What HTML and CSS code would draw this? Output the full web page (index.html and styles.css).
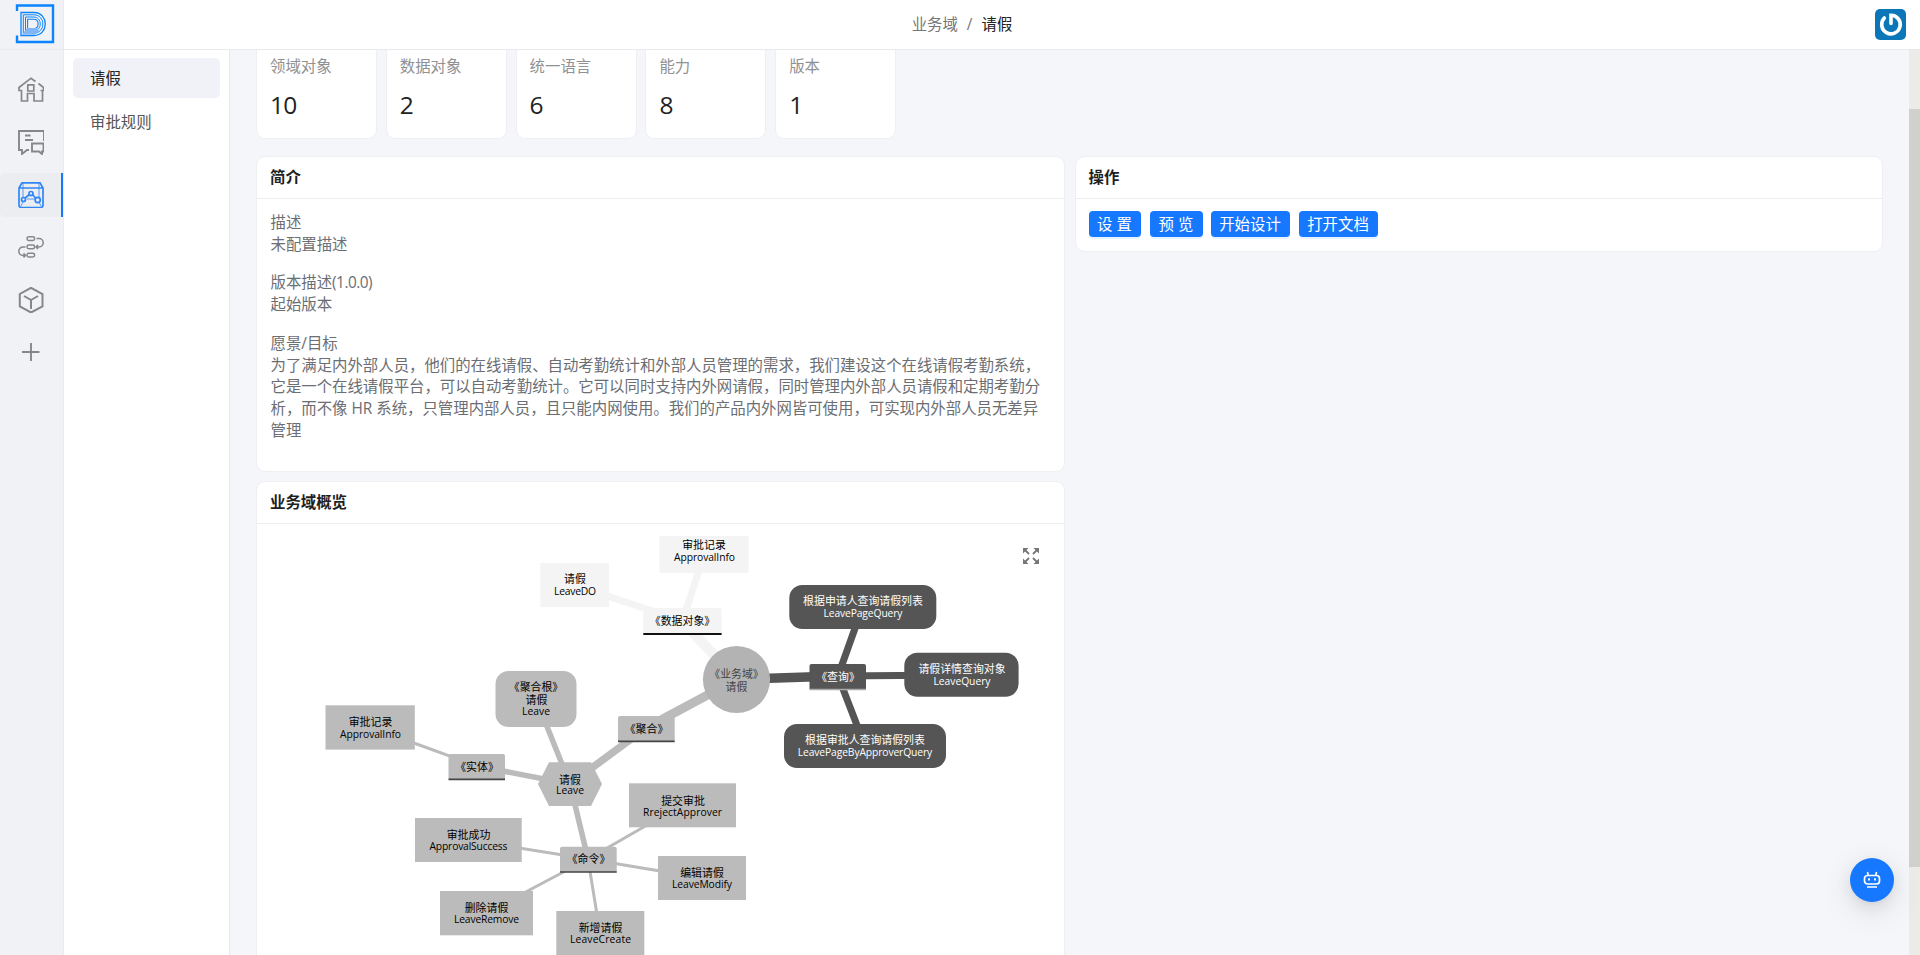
FILE: index.html
```html
<!DOCTYPE html>
<html lang="zh-CN">
<head>
<meta charset="utf-8">
<title>业务域 / 请假</title>
<link rel="stylesheet" href="styles.css">
</head>
<body>
<div class="app">
  <aside class="rail">
    <div class="logo">
      <svg width="40" height="40" viewBox="0 0 40 40" fill="none" stroke="#0a84ff">
        <path d="M2 7V1.500H38V38H2V31.500" stroke-width="2.400"/>
        <path d="M6 8.500h13c15 0 15 23 0 23H6z" stroke-width="1.300"/>
        <path d="M8.300 10.800h10.500c12 0 12 18.400 0 18.400H8.300z" stroke-width="1"/>
        <path d="M10.500 13h8c9 0 9 14 0 14h-8z" stroke-width="1"/>
        <path d="M12.600 15.300h6c6 0 6 9.400 0 9.400h-6z" stroke-width="1.100" fill="#f0f2f6"/>
        <path d="M7 30.500l5-6.500h9l4 3-5 3.500H7z" fill="#7fb6f8" stroke="none"/>
      </svg>
    </div>
    <nav class="rail-nav">
      <a class="rail-item"><svg class="icon" viewBox="0 0 26 26"><path d="M17.500 4.500L13 1.200 1 10.500v3h2.500V24h6v-7.500H16V24h8.500V14M20.500 6.500L25.500 10.500v3h-3M9.800 7.800h6v6.200h-6z"/></svg></a>
      <a class="rail-item"><svg class="icon" viewBox="0 0 26 26"><path d="M26 12V2H1v19h3v4l5-4h2M7 6.500h5.500M7 11h8M14 14.500h11.500v8H24v2.500L21 22.500h-7z" stroke-width="1.900"/></svg></a>
      <a class="rail-item active"><svg class="icon" viewBox="0 0 26 26"><path d="M1 6L4 .800h18L25 6v17q0 2.500-2.500 2.500h-19Q1 25.500 1 23zM1 6h24"/><path d="M5 1v14M21 1v14M5 20l-2 4M21 20l2 4M9 17h8" stroke-width=".8"/><path d="M7 16l4.500-3.500M14.500 12.500l3.500 4"/><circle cx="5.500" cy="17.500" r="2"/><circle cx="13" cy="11.500" r="2"/><circle cx="19.700" cy="18" r="2.600"/></svg></a>
      <a class="rail-item"><svg class="icon" viewBox="0 0 26 26"><g stroke-width="1.500"><rect x="9" y="2.700" width="7.600" height="3.800" rx="1.700"/><rect x="9" y="11" width="7.600" height="3.800" rx="1.700"/><rect x="9" y="19.200" width="7.600" height="3.800" rx="1.700"/><path d="M18.500 4.600H21a4.200 4.200 0 0 1 0 8.400h-3m2-2l-2 2 2 2M7.500 13H5a4.200 4.200 0 0 0 0 8.400h2.500m-2-2l2 2-2 2"/></g></svg></a>
      <a class="rail-item"><svg class="icon" viewBox="0 0 26 26"><path d="M13 .800L24.500 7v12.500L13 25.500 1.800 19.500V7zM13 22v-9L6 9m7 4l7-4" stroke-width="2"/></svg></a>
      <a class="rail-item"><svg class="icon" viewBox="0 0 26 26"><path d="M13 4v18M4 13h17.500" stroke-width="1.900"/></svg></a>
    </nav>
  </aside>
  <div class="page">
    <header class="topbar">
      <div class="crumbs"><span>业务域</span><span class="sep">/</span><span class="current">请假</span></div>
      <div class="avatar"><svg width="31" height="31" viewBox="0 0 31 31" fill="none" stroke="#fff" stroke-width="3.600" stroke-linecap="round"><path d="M9.300 9A9.300 9.300 0 1 0 16 6.200v8.300"/></svg></div>
    </header>
    <div class="below">
      <nav class="side">
        <a class="side-item selected">请假</a>
        <a class="side-item">审批规则</a>
      </nav>
      <main class="content">
        <div class="stats">
          <div class="stat"><div class="stat-label">领域对象</div><div class="stat-num">10</div></div>
          <div class="stat"><div class="stat-label">数据对象</div><div class="stat-num">2</div></div>
          <div class="stat"><div class="stat-label">统一语言</div><div class="stat-num">6</div></div>
          <div class="stat"><div class="stat-label">能力</div><div class="stat-num">8</div></div>
          <div class="stat"><div class="stat-label">版本</div><div class="stat-num">1</div></div>
        </div>
        <div class="columns">
          <div class="column">
            <section class="card intro">
              <h2 class="card-title">简介</h2>
              <div class="card-body">
                <p>描述<br>未配置描述</p>
                <p>版本描述<span class="ver">(1.0.0)</span><br>起始版本</p>
                <p>愿景/目标<br>为了满足内外部人员，他们的在线请假、自动考勤统计和外部人员管理的需求，我们建设这个在线请假考勤系统，<br>它是一个在线请假平台，可以自动考勤统计。它可以同时支持内外网请假，同时管理内外部人员请假和定期考勤分<br>析，而不像 HR 系统，只管理内部人员，且只能内网使用。我们的产品内外网皆可使用，可实现内外部人员无差异<br>管理</p>
              </div>
            </section>
            <section class="card overview">
              <h2 class="card-title">业务域概览</h2>
              <svg class="mindmap" width="806" height="432" viewBox="257 524 806 432">
                <g class="edge light"><path d="M736.500 679.500L682.500 621" stroke-width="10"/><path d="M704 555L682.500 621L574.700 585" stroke-width="7"/></g>
                <g class="edge mid"><path d="M736.500 679.500L646 728" stroke-width="9"/><path d="M646 728L570 784" stroke-width="7.500"/><path d="M570 784L536 699M570 784L477 766M570 784L588 859" stroke-width="5.500"/><path d="M477 766L370 727M588 859L468 840M588 859L486 913M588 859L600 933M588 859L702 878M588 859L682 805" stroke-width="3"/></g>
                <g class="edge dark"><path d="M736.500 679.500L838 676" stroke-width="9.500"/><path d="M838 676L862.600 607M838 676L961.600 675M838 676L865 746" stroke-width="7"/></g>

                <g class="fill-light">
                  <rect x="659.500" y="536" width="89" height="37"/>
                  <rect x="540.300" y="563" width="68.700" height="44"/>
                  <path d="M643.300 634v-24q0-2 2-2h74.300q2 0 2 2v24z"/>
                </g>
                <circle cx="736.500" cy="679.500" r="33.600" fill="#b3b3b3"/>
                <g class="fill-mid">
                  <path d="M618 741v-23q0-2 2-2h52.700q2 0 2 2v23z"/>
                  <rect x="495.500" y="671" width="81" height="56" rx="13"/>
                  <rect x="325.500" y="705.300" width="89.300" height="44.300"/>
                  <path d="M448.500 779v-23q0-2 2-2H503q2 0 2 2v23z"/>
                  <path d="M538 784l11-21.700h42l11 21.700-11 22h-42z"/>
                  <rect x="629" y="783.300" width="107" height="44"/>
                  <rect x="415" y="818" width="106.700" height="44"/>
                  <path d="M560 872v-23.300q0-2 2-2h52.700q2 0 2 2V872z"/>
                  <rect x="658" y="856" width="88" height="44"/>
                  <rect x="440" y="891" width="93" height="44.300"/>
                  <rect x="556.300" y="911" width="88" height="45"/>
                </g>
                <g class="fill-dark">
                  <rect x="789.300" y="585" width="147" height="44" rx="13"/>
                  <path d="M809.500 689v-23q0-2 2-2H864q2 0 2 2v23z"/>
                  <rect x="904.300" y="652.700" width="114.300" height="44" rx="13"/>
                  <rect x="784" y="724" width="162" height="44" rx="13"/>
                </g>
                <path d="M643.300 634h78.300" stroke="#111" stroke-width="2"/>
                <path d="M618 741.300h56.700M448.500 779.300H505M560 872h56.700" stroke="#444" stroke-width="1.700"/>
                <path d="M809.500 689.500H866" stroke="#aaa" stroke-width="1.600"/>

                <g class="label">
                  <text x="704" y="549">审批记录</text><text x="704.500" y="560.500" textLength="61">ApprovalInfo</text>
                  <text x="575" y="583">请假</text><text x="575" y="594.500" textLength="42">LeaveDO</text>
                  <text x="682.500" y="625">《数据对象》</text>
                  <text x="646.500" y="733">《聚合》</text>
                  <text x="536" y="691">《聚合根》</text><text x="536.500" y="703.500">请假</text><text x="536" y="714.500" textLength="28">Leave</text>
                  <text x="370.500" y="726">审批记录</text><text x="370.500" y="738" textLength="61">ApprovalInfo</text>
                  <text x="477" y="771">《实体》</text>
                  <text x="570" y="783.500">请假</text><text x="570" y="794" textLength="28">Leave</text>
                  <text x="683" y="804.500">提交审批</text><text x="682.500" y="816" textLength="79">RrejectApprover</text>
                  <text x="468.500" y="838.500">审批成功</text><text x="468.500" y="850" textLength="78">ApprovalSuccess</text>
                  <text x="588.500" y="863">《命令》</text>
                  <text x="702" y="876.500">编辑请假</text><text x="702" y="888" textLength="60">LeaveModify</text>
                  <text x="486.500" y="911.500">删除请假</text><text x="486.500" y="923" textLength="65">LeaveRemove</text>
                  <text x="600.500" y="931.500">新增请假</text><text x="600.500" y="943" textLength="61">LeaveCreate</text>
                </g>
                <g class="label root"><text x="736.500" y="678">《业务域》</text><text x="736.500" y="690.500">请假</text></g>
                <g class="label inverse">
                  <text x="863" y="605">根据申请人查询请假列表</text><text x="863" y="616.500" textLength="79">LeavePageQuery</text>
                  <text x="838" y="681">《查询》</text>
                  <text x="962" y="673">请假详情查询对象</text><text x="962" y="684.500" textLength="57">LeaveQuery</text>
                  <text x="865" y="744">根据审批人查询请假列表</text><text x="865" y="756" textLength="134.500">LeavePageByApproverQuery</text>
                </g>
                <g fill="#777" stroke="#777" stroke-width="1.800">
                  <path d="M1024 549l5 5M1038 549l-5 5M1024 563l5-5M1038 563l-5-5"/>
                  <path d="M1023 548h5.500l-5.500 5.500zM1039 548v5.500l-5.500-5.500zM1023 564v-5.500l5.500 5.500zM1039 564h-5.500l5.500-5.500z" stroke="none"/>
                </g>
              </svg>
            </section>
          </div>
          <div class="column">
            <section class="card actions">
              <h2 class="card-title">操作</h2>
              <div class="buttons">
                <button class="btn w1">设 置</button><button class="btn w2">预 览</button><button class="btn w3">开始设计</button><button class="btn w3 last">打开文档</button>
              </div>
            </section>
          </div>
        </div>
      </main>
      <div class="scrollbar"><div class="thumb"></div></div>
    </div>
  </div>
  <div class="fab"><svg width="18" height="18" viewBox="0 0 18 18" fill="none" stroke="#fff" stroke-width="1.700"><path d="M4.500 1l.6 3M13.500 1l-.6 3M4 16h10"/><rect x="1.500" y="4.500" width="15" height="8.500" rx="3"/><path d="M6 7.200v2.400M12 7.200v2.400" stroke-width="1.800"/></svg></div>
</div>
</body>
</html>
```
FILE: styles.css
```css
* { box-sizing: border-box; }
body {
  margin: 0;
  overflow: hidden;
  font-family: "Open Sans", "Noto Sans CJK SC", sans-serif;
  font-size: 15.4px;
  line-height: 21.7px;
  color: #6b6e73;
}
.app { display: flex; width: 100%; height: 955px; background: #f5f6fa; overflow: hidden; }
.rail { width: 64px; flex: none; background: #f0f2f6; border-right: 1px solid #e9ebee; }
.logo { height: 50px; padding: 4px 0 0 15px; border-bottom: 1px solid #e8eaed; }
.logo svg { display: block; }
.rail-nav { display: flex; flex-direction: column; gap: 8.600px; padding-top: 17.500px; }
.rail-item { height: 44px; display: flex; align-items: center; padding-left: 18px; color: #85878a; border-radius: 5px 0 0 5px; }
.rail-item.active { background: #ebedf1; color: #2f86f6; border-right: 2px solid #1677ff; }
.icon { width: 26px; height: 26px; fill: none; stroke: currentColor; stroke-width: 1.700; }
.page { flex: 1; min-width: 0; display: flex; flex-direction: column; }
.topbar { flex: none; height: 50px; background: #fff; border-bottom: 1px solid #e8eaed; display: grid; grid-template-columns: 1fr auto 1fr; align-items: center; }
.crumbs { grid-column: 2; display: flex; gap: 9px; padding-right: 60px; color: #777; }
.crumbs .current { color: #222; }
.avatar { justify-self: end; width: 31px; height: 31px; margin-right: 14px; border-radius: 5px; background: #0b76b8; }
.below { flex: 1; min-height: 0; display: flex; }
.side { flex: none; width: 166px; background: #fff; border-right: 1px solid #e6e9ee; padding: 8px 9px; }
.side-item { display: flex; align-items: center; height: 40px; padding: 2px 0 0 17px; margin-bottom: 4px; border-radius: 5px; color: #555; }
.side-item.selected { background: #f0f2f7; color: #222; }
.content { flex: 1; min-width: 0; padding: 0 26px; overflow: hidden; }
.stats { display: flex; gap: 8.800px; }
.stat { width: 121px; height: 89px; background: #fff; border: 1px solid #eeeff1; border-top: 0; border-radius: 0 0 9px 9px; padding: 6px 13px; }
.stat-label { color: #909193; }
.stat-num { font-size: 24.500px; line-height: 34px; margin-top: 10px; color: #222; letter-spacing: -0.8px; }
.columns { display: grid; grid-template-columns: minmax(0, 1fr) minmax(0, 1fr); gap: 10px; margin-top: 17px; }
.card { background: #fff; border: 1px solid #eeeff1; border-radius: 9px; overflow: hidden; }
.card-title { margin: 0; height: 42px; padding: 10px 13px 0; border-bottom: 1px solid #eee; font-size: 15.400px; line-height: 22px; font-weight: 600; color: #1f1f1f; }
.intro { height: 315.500px; }
.card-body { padding: 13px 13px 0 13.500px; white-space: nowrap; }
.card-body p { margin: 0 0 17px; }
.ver { font-weight: 500; letter-spacing: -0.5px; }
.overview { margin-top: 9.500px; height: 500px; }
.mindmap { display: block; }
.edge { fill: none; }
.edge.light { stroke: #f4f4f4; }
.edge.mid { stroke: #bbb; }
.edge.dark { stroke: #555; }
.fill-light { fill: #f4f4f4; }
.fill-mid { fill: #bbb; }
.fill-dark { fill: #555; }
.label { font-family: "Open Sans", "Noto Sans CJK SC", sans-serif; font-size: 10.900px; text-anchor: middle; fill: #000; }
.label text[textLength] { font-size: 10.300px; }
.label.root { fill: #444; }
.label.inverse { fill: #fff; }
.actions { height: 96px; }
.buttons { display: flex; padding: 12px 13px; }
.btn { height: 26px; margin: 0 9px 0 0; padding: 1px 0 0; border: 0; border-radius: 4px; background: #1677ff; box-shadow: 0 2px 0 rgba(5,145,255,.1); color: #fff; font: inherit; }
.w1 { width: 52px; }
.w2 { width: 53px; margin-right: 8px; }
.w3 { width: 79px; }
.scrollbar { flex: none; width: 11px; background: #ecebe8; padding-top: 59px; }
.thumb { height: 758px; background: #d0d0cc; }
.fab { position: absolute; left: 1850px; top: 858px; width: 44px; height: 44px; border-radius: 50%; background: #1677ff; display: flex; align-items: center; justify-content: center; box-shadow: 0 6px 16px rgba(0,0,0,.08), 0 3px 6px -4px rgba(0,0,0,.12), 0 9px 28px 8px rgba(0,0,0,.05); }
```
